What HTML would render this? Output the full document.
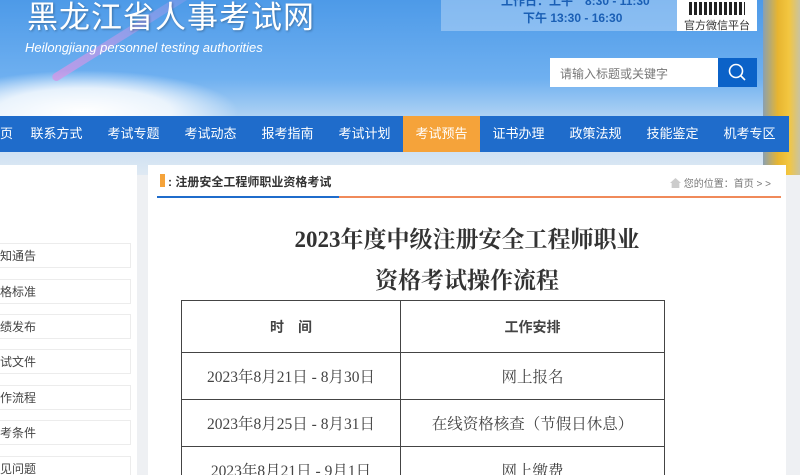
<!DOCTYPE html>
<html><head><meta charset="utf-8"><style>
*{margin:0;padding:0;box-sizing:border-box}
html{height:475px;overflow:hidden}
body{width:800px;height:475px;overflow:hidden;position:relative;font-family:"Liberation Sans","Noto Sans CJK SC",sans-serif;background:#eef0f3}
.hdr{position:absolute;left:0;top:0;width:800px;height:175px;background:linear-gradient(180deg,#4d9ae8 0%,#6fb0f0 45%,#b9d8f4 70%,#dfe9f3 100%)}
.cloud{position:absolute;left:-20px;top:70px;width:260px;height:60px;background:radial-gradient(ellipse at 40% 70%,#fff 0%,rgba(255,255,255,.8) 40%,rgba(255,255,255,0) 70%)}
.streak{position:absolute;left:40px;top:30px;width:170px;height:8px;background:linear-gradient(90deg,rgba(210,150,230,.8),rgba(180,160,240,.2));transform:rotate(-32deg);border-radius:4px}
.gold{position:absolute;left:763px;top:0;width:37px;height:175px;background:linear-gradient(90deg,#8aa0b0,#e7b530 40%,#f3c640 70%,#c9c3a0)}
.logo{position:absolute;left:27px;top:-8px;font-size:31px;color:#fff;letter-spacing:1px;text-shadow:1px 1px 2px rgba(0,0,0,.3)}
.sub{position:absolute;left:25px;top:40px;font-size:13px;color:#fff;font-style:italic}
.hours{position:absolute;left:441px;top:0;width:236px;height:31px;background:rgba(200,225,250,.45);color:#1a5fb5;font-size:12px;font-weight:bold}
.qr{position:absolute;left:677px;top:0;width:80px;height:31px;background:#fff;font-size:11px;text-align:center;color:#333}
.search{position:absolute;left:550px;top:58px;width:168px;height:29px;background:#fff;font-size:12px;color:#777;padding:7px 10px}
.sbtn{position:absolute;left:718px;top:58px;width:39px;height:29px;background:#0b62c8}
.nav{position:absolute;left:0;top:116px;width:789px;height:36px;background:#1f6ccb;display:flex}
.nav div{color:#fff;font-size:13px;line-height:36px;width:77px;text-align:center}
.nav .on{background:#f5a33a}
.side{position:absolute;left:0;top:165px;width:137px;height:310px;background:#fff}
.si{position:absolute;left:0;width:131px;height:25px;border:1px solid #ececec;border-left:none;font-size:12px;color:#444;line-height:24px}
.main{position:absolute;left:148px;top:165px;width:638px;height:310px;background:#fff;overflow:hidden}
.bar{position:absolute;left:12px;top:9px;width:5px;height:13px;background:#f5a33a}
.mt{position:absolute;left:20px;top:8px;font-size:12px;font-weight:bold;color:#333}
.ul1{position:absolute;left:9px;top:31px;width:182px;height:2px;background:#1f6ccb}
.ul2{position:absolute;left:191px;top:31px;width:442px;height:2px;background:#f08a5a}
.bc{position:absolute;left:522px;top:10px;font-size:10px;color:#777}
h1{position:absolute;left:0;width:638px;text-align:center;font-family:"Liberation Serif","Noto Serif CJK SC",serif;font-size:23px;color:#333;font-weight:bold}
table{position:absolute;left:33px;top:135px;border-collapse:collapse;width:484px}
td{border:1px solid #444;text-align:center;font-size:15.5px;color:#444;font-family:"Liberation Serif","Noto Serif CJK SC",serif}
td.h{height:52px;font-weight:bold;font-size:14px;font-family:"Liberation Sans","Noto Sans CJK SC",sans-serif}
td.r{height:47px}
</style></head><body>
<div class="hdr"><div class="cloud"></div><div class="streak"></div><div class="gold"></div></div>
<div class="logo">黑龙江省人事考试网</div>
<div class="sub">Heilongjiang personnel testing authorities</div>
<div class="hours"><div style="position:absolute;left:60px;top:-8px">工作日：上午　8:30 - 11:30</div><div style="position:absolute;left:82px;top:9px">下午  13:30 - 16:30</div></div>
<div class="qr"><div style="height:13px;margin:2px 12px;background:repeating-linear-gradient(90deg,#222 0 3px,#fff 3px 5px)"></div>官方微信平台</div>
<div class="search">请输入标题或关键字</div>
<div class="sbtn"><svg width="39" height="29"><circle cx="18" cy="13" r="6.5" fill="none" stroke="#fff" stroke-width="1.6"/><line x1="23" y1="18" x2="27" y2="22" stroke="#fff" stroke-width="1.6"/></svg></div>
<div class="nav"><div style="width:18px;text-align:left">页</div><div>联系方式</div><div>考试专题</div><div>考试动态</div><div>报考指南</div><div>考试计划</div><div class="on">考试预告</div><div>证书办理</div><div>政策法规</div><div>技能鉴定</div><div>机考专区</div></div>
<div class="side">
<div class="si" style="top:78px">知通告</div>
<div class="si" style="top:114px">格标准</div>
<div class="si" style="top:149px">绩发布</div>
<div class="si" style="top:184px">试文件</div>
<div class="si" style="top:220px">作流程</div>
<div class="si" style="top:255px">考条件</div>
<div class="si" style="top:291px">见问题</div>
</div>
<div class="main">
<div class="bar"></div><div class="mt">: 注册安全工程师职业资格考试</div>
<div class="ul1"></div><div class="ul2"></div>
<div class="bc"><span style="display:inline-block;width:11px;height:10px;background:#ccc;vertical-align:-1px;clip-path:polygon(50% 0,100% 50%,85% 50%,85% 100%,15% 100%,15% 50%,0 50%)"></span> 您的位置：首页 &gt; &gt;</div>
<h1 style="top:56px">2023年度中级注册安全工程师职业</h1>
<h1 style="top:97px">资格考试操作流程</h1>
<table>
<tr><td class="h" style="width:219px">时　间</td><td class="h">工作安排</td></tr>
<tr><td class="r">2023年8月21日 - 8月30日</td><td class="r">网上报名</td></tr>
<tr><td class="r">2023年8月25日 - 8月31日</td><td class="r">在线资格核查（节假日休息）</td></tr>
<tr><td class="r">2023年8月21日 - 9月1日</td><td class="r">网上缴费</td></tr>
</table>
</div>
</body></html>
